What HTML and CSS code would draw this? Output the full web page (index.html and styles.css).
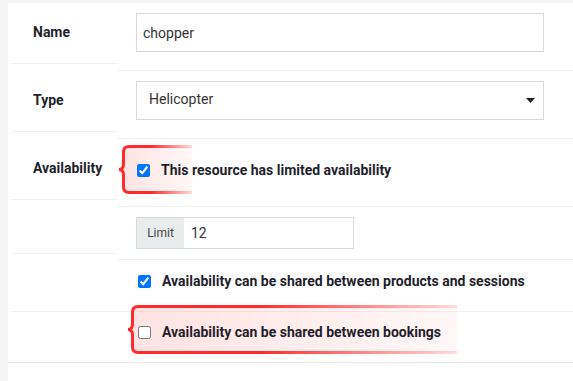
FILE: index.html
```html
<!DOCTYPE html>
<html>
<head>
<meta charset="utf-8">
<link rel="stylesheet" href="styles.css">
</head>
<body>
<div class="card">
  <div class="form">
    <div class="label lab-off7">Name</div>
    <div class="field f-name"><input class="text-input" type="text" value="chopper"></div>

    <div class="label lab-off7">Type</div>
    <div class="field f-type">
      <div class="select-wrap">
        <select class="select"><option>Helicopter</option></select>
        <svg class="caret" width="9" height="5" viewBox="0 0 9 5"><polygon points="0,0 9,0 4.5,5" fill="#222"/></svg>
      </div>
    </div>

    <div class="label lab-off7">Availability</div>
    <div class="field f-limited">
      <svg class="brace brace1" width="74" height="51" viewBox="0 0 74 51">
        <defs>
          <linearGradient id="fill1" x1="0" y1="0" x2="1" y2="0">
            <stop offset="0" stop-color="#ff0000" stop-opacity="0.11"/>
            <stop offset="1" stop-color="#ff0000" stop-opacity="0.03"/>
          </linearGradient>
          <linearGradient id="stroke1" gradientUnits="userSpaceOnUse" x1="0" y1="0" x2="74" y2="0">
            <stop offset="0" stop-color="#ff2b2b" stop-opacity="1"/>
            <stop offset="0.45" stop-color="#ff2b2b" stop-opacity="1"/>
            <stop offset="1" stop-color="#ff2b2b" stop-opacity="0.15"/>
          </linearGradient>
        </defs>
        <path d="M74 2.5 H11 Q5.5 2.5 5.5 8 V43 Q5.5 48.5 11 48.5 H74 Z" fill="url(#fill1)"/>
        <path d="M74 2.5 H11 Q5.5 2.5 5.5 8 V20 Q5.5 25.5 1 25.5 Q5.5 25.5 5.5 31 V43 Q5.5 48.5 11 48.5 H74" fill="none" stroke="url(#stroke1)" stroke-width="3"/>
      </svg>
      <label class="check"><input type="checkbox" checked><span>This resource has limited availability</span></label>
    </div>

    <div class="label lab-off6"></div>
    <div class="field f-limit">
      <div class="group">
        <span class="addon">Limit</span>
        <input class="group-input" type="text" value="12">
      </div>
    </div>

    <div class="label"></div>
    <div class="field f-shared1">
      <label class="check"><input type="checkbox" checked><span>Availability can be shared between products and sessions</span></label>
    </div>

    <div class="label lab-last"></div>
    <div class="field f-shared2">
      <svg class="brace brace2" width="330" height="51" viewBox="0 0 330 51">
        <defs>
          <linearGradient id="fill2" x1="0" y1="0" x2="1" y2="0">
            <stop offset="0" stop-color="#ff0000" stop-opacity="0.11"/>
            <stop offset="1" stop-color="#ff0000" stop-opacity="0.03"/>
          </linearGradient>
          <linearGradient id="stroke2" gradientUnits="userSpaceOnUse" x1="0" y1="0" x2="330" y2="0">
            <stop offset="0" stop-color="#ff2b2b" stop-opacity="1"/>
            <stop offset="0.4" stop-color="#ff2b2b" stop-opacity="1"/>
            <stop offset="1" stop-color="#ff2b2b" stop-opacity="0.15"/>
          </linearGradient>
        </defs>
        <path d="M330 2.5 H11 Q5.5 2.5 5.5 8 V43 Q5.5 48.5 11 48.5 H330 Z" fill="url(#fill2)"/>
        <path d="M330 2.5 H11 Q5.5 2.5 5.5 8 V20 Q5.5 25.5 1 25.5 Q5.5 25.5 5.5 31 V43 Q5.5 48.5 11 48.5 H330" fill="none" stroke="url(#stroke2)" stroke-width="3"/>
      </svg>
      <label class="check"><input type="checkbox"><span>Availability can be shared between bookings</span></label>
    </div>
  </div>
</div>
</body>
</html>
```

FILE: styles.css
```css
* { box-sizing: border-box; }
html, body { margin: 0; }
body {
  background: #f5f5f5;
  font-family: Roboto, "Liberation Sans", Arial, sans-serif;
  font-size: 14px;
  color: #1f1f2b;
}
.card {
  margin: 3px 0 0 8px;
  background: #fff;
  min-height: 378px;
}
.form {
  display: grid;
  grid-template-columns: 109px 1fr;
  border-bottom: 1px solid #e6e6e6;
}
.label {
  margin-left: 4px;
  padding: 19px 0 0 21px;
  font-weight: 700;
  line-height: 20px;
  border-bottom: 1px solid #f0f0f0;
}
.lab-off7 { margin-bottom: 7px; }
.lab-off6 { margin-bottom: 6px; }
.lab-last { border-bottom: 0; }

.field {
  position: relative;
  border-bottom: 1px solid #f0f0f0;
}
.f-name { padding: 10px 29px 18px 19px; }
.f-type { padding: 10px 29px 18px 19px; }
.f-limited { padding: 21px 0 26px 20px; }
.f-limit { padding: 10px 0 10px 19px; }
.f-shared1 { padding: 11px 0 20px 21px; }
.f-shared2 { padding: 10px 0 20px 21px; border-bottom: 0; }

.text-input {
  display: block;
  width: 100%;
  height: 39px;
  margin: 0;
  border: 1px solid #d9d9d9;
  border-radius: 0;
  padding: 0 6px;
  font: inherit;
  color: #333;
  background: #fff;
  outline: none;
}
.select-wrap { position: relative; }
.select {
  display: block;
  width: 100%;
  height: 39px;
  margin: 0;
  border: 1px solid #d9d9d9;
  border-radius: 0;
  padding: 0 12px 3px;
  font: inherit;
  color: #333;
  background: #fff;
  appearance: none;
  -webkit-appearance: none;
  outline: none;
}
.caret {
  position: absolute;
  right: 9px;
  top: 17px;
  display: block;
}

.check {
  position: relative;
  display: flex;
  align-items: center;
  gap: 11px;
  height: 20px;
  font-weight: 700;
}
.check input {
  margin: 0;
  width: 13px;
  height: 13px;
}
.brace {
  position: absolute;
  display: block;
}
.brace1 { left: 1px; top: 5px; }
.brace2 { left: 10px; top: -8px; }

.group {
  display: flex;
  width: 218px;
  height: 32px;
  border: 1px solid #d9d9d9;
}
.addon {
  width: 47px;
  background: #e9ecec;
  display: flex;
  align-items: center;
  justify-content: center;
  font-size: 12px;
  color: #444;
}
.group-input {
  flex: 1;
  min-width: 0;
  border: 0;
  margin: 0;
  padding: 0 7px;
  font: inherit;
  color: #333;
  outline: none;
  background: #fff;
}
```
